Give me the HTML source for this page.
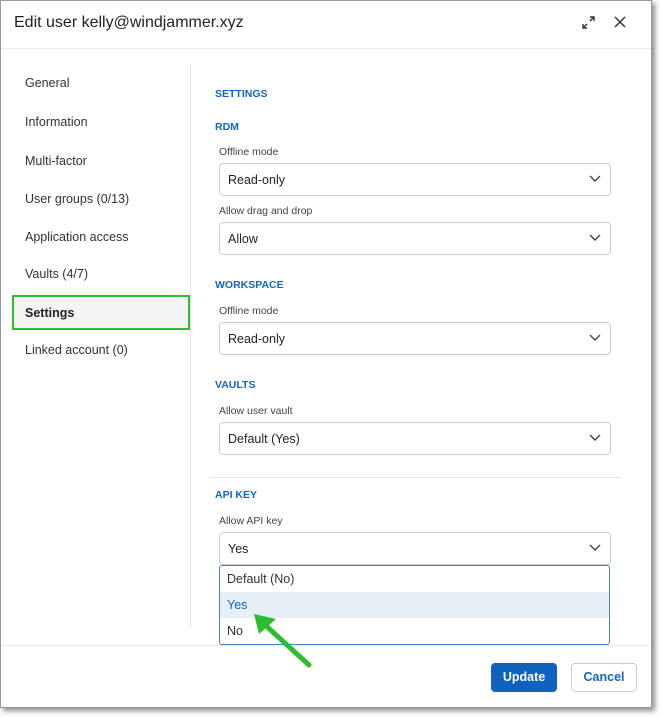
<!DOCTYPE html>
<html><head><style>
*{box-sizing:border-box;margin:0;padding:0}
body{width:662px;height:717px;background:#fff;font-family:"Liberation Sans",sans-serif;position:relative;overflow:hidden;color:#333}
.dlg{position:absolute;left:0;top:0;width:652px;height:708px;background:#fff;border:1px solid #999;box-shadow:3px 3px 5px rgba(0,0,0,.45)}
.abs{position:absolute}
.title{left:13px;top:13px;font-size:16px;color:#222}
.nav{left:24px;font-size:12.5px;color:#333}
.sec{left:214px;font-size:10.5px;font-weight:bold;color:#1565c0}
.lbl{left:218px;font-size:10.5px;color:#444}
.sel{left:218px;width:392px;height:33px;border:1px solid #ccc;border-radius:4px;font-size:12.5px;color:#222;padding:9px 0 0 8px}
.sel svg{position:absolute;right:9px;top:11px}
.opt{position:absolute;left:0;width:100%;height:26px;font-size:12.5px;padding:6px 0 0 7px}
</style></head><body>
<div class="dlg">
<div class="abs title">Edit user kelly@windjammer.xyz</div>
<svg class="abs" style="left:581px;top:15px" width="13" height="13" viewBox="0 0 13 13" fill="none" stroke="#333" stroke-width="1.4"><path d="M8 1h4v4M12 1L8 5M1 8v4h4M1 12l4-4"/></svg>
<svg class="abs" style="left:613px;top:15px" width="12" height="12" viewBox="0 0 12 12" stroke="#333" stroke-width="1.5"><path d="M1 1l10 10M11 1L1 11"/></svg>
<div class="abs" style="left:0;top:47px;width:650px;height:1px;background:#e6edf3"></div>
<div class="abs" style="left:189px;top:63px;width:1px;height:564px;background:#e6e6e6"></div>
<div class="abs nav" style="top:75px">General</div>
<div class="abs nav" style="top:114px">Information</div>
<div class="abs nav" style="top:153px">Multi-factor</div>
<div class="abs nav" style="top:191px">User groups (0/13)</div>
<div class="abs nav" style="top:229px">Application access</div>
<div class="abs nav" style="top:266px">Vaults (4/7)</div>
<div class="abs" style="left:11px;top:294px;width:178px;height:35px;border:2px solid #2ebd2e;background:#f4f4f4"></div>
<div class="abs nav" style="top:305px;font-weight:bold;color:#222">Settings</div>
<div class="abs nav" style="top:342px">Linked account (0)</div>

<div class="abs sec" style="top:87px">SETTINGS</div>
<div class="abs sec" style="top:120px">RDM</div>
<div class="abs lbl" style="top:145px">Offline mode</div>
<div class="abs sel" style="top:162px">Read-only<svg width="12" height="8" viewBox="0 0 12 8" fill="none" stroke="#444" stroke-width="1.4"><path d="M1 1l5 5 5-5"/></svg></div>
<div class="abs lbl" style="top:204px">Allow drag and drop</div>
<div class="abs sel" style="top:221px">Allow<svg width="12" height="8" viewBox="0 0 12 8" fill="none" stroke="#444" stroke-width="1.4"><path d="M1 1l5 5 5-5"/></svg></div>
<div class="abs sec" style="top:278px">WORKSPACE</div>
<div class="abs lbl" style="top:304px">Offline mode</div>
<div class="abs sel" style="top:321px">Read-only<svg width="12" height="8" viewBox="0 0 12 8" fill="none" stroke="#444" stroke-width="1.4"><path d="M1 1l5 5 5-5"/></svg></div>
<div class="abs sec" style="top:378px">VAULTS</div>
<div class="abs lbl" style="top:404px">Allow user vault</div>
<div class="abs sel" style="top:421px">Default (Yes)<svg width="12" height="8" viewBox="0 0 12 8" fill="none" stroke="#444" stroke-width="1.4"><path d="M1 1l5 5 5-5"/></svg></div>
<div class="abs" style="left:209px;top:476px;width:410px;height:1px;background:#d8e6f3"></div>
<div class="abs sec" style="top:488px">API KEY</div>
<div class="abs lbl" style="top:514px">Allow API key</div>
<div class="abs sel" style="top:531px">Yes<svg width="12" height="8" viewBox="0 0 12 8" fill="none" stroke="#444" stroke-width="1.4"><path d="M1 1l5 5 5-5"/></svg></div>
<div class="abs" style="left:0;top:644px;width:650px;height:1px;background:#e6edf3"></div>
<div class="abs" style="left:218px;top:564px;width:391px;height:80px;border:1px solid #4a7fc1;border-radius:3px;background:#fff;overflow:hidden">
<div class="opt" style="top:0;color:#333">Default (No)</div>
<div class="opt" style="top:26px;background:#e6eff8;color:#1565c0">Yes</div>
<div class="opt" style="top:52px;color:#333">No</div>
</div>
<svg class="abs" style="left:249px;top:609px" width="65" height="60" viewBox="0 0 65 60"><path d="M59 55L14 14" stroke="#2ebd2e" stroke-width="5" stroke-linecap="round"/><path d="M4 4L26 9 9 24Z" fill="#2ebd2e"/></svg>
<div class="abs" style="left:490px;top:662px;width:66px;height:29px;background:#0f62c0;border-radius:4px;color:#fff;font-size:12.5px;font-weight:bold;text-align:center;line-height:29px">Update</div>
<div class="abs" style="left:570px;top:662px;width:66px;height:29px;border:1px solid #ccc;border-radius:4px;color:#1565c0;font-size:12.5px;font-weight:bold;text-align:center;line-height:27px">Cancel</div>
</div>
</body></html>
